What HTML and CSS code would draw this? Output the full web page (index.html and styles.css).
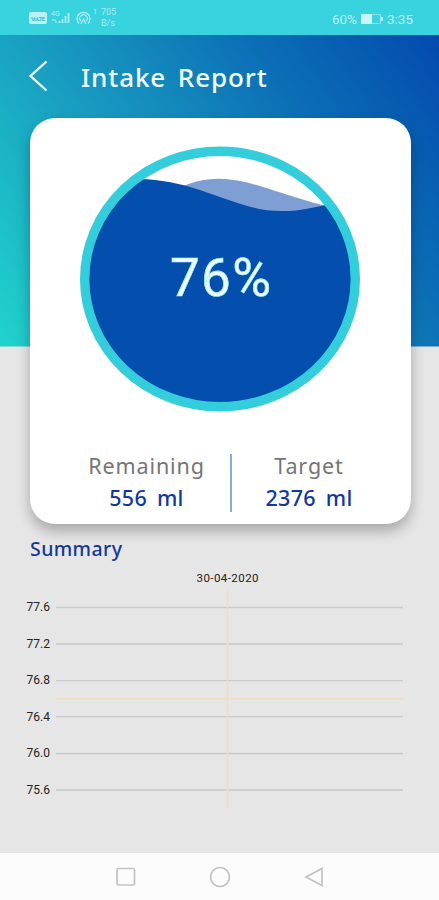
FILE: index.html
```html
<!DOCTYPE html>
<html lang="en">
<head>
    <meta charset="UTF-8">
    <meta name="viewport" content="width=device-width, initial-scale=1.0">
    <title>Intake Report</title>
    <link rel="stylesheet" href="styles.css">
</head>
<body>
    <div class="status-bar">
        <div class="status-left">
            <svg class="status-icons" width="70" height="22" viewBox="0 0 70 22">
                <rect x="0" y="5" width="18" height="12" rx="2" fill="#b9f1f5"/>
                <text x="9" y="13.500" class="volte" textLength="14">VoLTE</text>
                <text x="22" y="9" class="tiny">4G</text>
                <path d="M23 13h4M27 14v2" stroke="#a9ecf1" stroke-width="1"/>
                <path d="M30.500 16v-2M33.500 16v-4M36.500 16v-7M39.500 16v-10" stroke="#a9ecf1" stroke-width="1.800"/>
                <g fill="none" stroke="#b0eff3" stroke-width="1.200">
                    <path d="M50 16.500a6.500 6.500 0 1 1 9 0"/>
                    <path d="M51.800 14a3.700 3.700 0 1 1 5.400 0"/>
                    <path d="M52 17l2.500-5 2.500 5"/>
                </g>
                <text x="64" y="7" class="tiny">1</text>
            </svg>
            <div class="speed"><span>705</span><span>B/s</span></div>
        </div>
        <div class="status-right">
            <span>60%</span>
            <svg width="24" height="10" viewBox="0 0 24 10">
                <path d="M1 0h11v10H1z" fill="#c9f5f8"/>
                <path d="M12 .6h8.500v8.800H12" fill="none" stroke="#8ce5eb" stroke-width="1"/>
                <path d="M22 3v4" stroke="#b9f1f5" stroke-width="1.800"/>
            </svg>
            <span>3:35</span>
        </div>
    </div>

    <main class="report">
        <header class="toolbar">
            <svg class="back" width="20" height="32" viewBox="0 0 20 32">
                <path d="M17.500 1.500L1.500 16l16 14.500" fill="none" stroke="#f4feff" stroke-width="2.300"/>
            </svg>
            <h1>Intake Report</h1>
        </header>

        <section class="card">
            <svg class="gauge" width="282" height="266" viewBox="0 0 282 266">
                <defs>
                    <clipPath id="bowl"><ellipse cx="141" cy="133" rx="133" ry="127"/></clipPath>
                </defs>
                <g clip-path="url(#bowl)">
                    <path d="M94 45C126 28 152 31 184 41S224 54 247 60L200 80Z" fill="#7f9fd4"/>
                    <path d="M0 44C30 36 48 31 76 34C126 39 162 66 204 65C224 65 236 61 282 51V266H0Z" fill="#044fad"/>
                </g>
                <ellipse cx="141" cy="133" rx="135.300" ry="127.700" fill="none" stroke="#33cddb" stroke-width="9.400"/>
                <text x="141.500" y="150" class="percent" textLength="101">76%</text>
            </svg>
            <div class="stats">
                <div class="stat">
                    <span class="label">Remaining</span>
                    <span class="value">556 ml</span>
                </div>
                <div class="stat">
                    <span class="label">Target</span>
                    <span class="value">2376 ml</span>
                </div>
            </div>
        </section>

        <h2>Summary</h2>
        <svg class="chart" width="439" height="250" viewBox="0 0 439 250">
            <text x="227.500" y="17" class="date" textLength="62">30-04-2020</text>
            <g class="ticks">
                <text x="50" y="46">77.6</text>
                <text x="50" y="82.500">77.2</text>
                <text x="50" y="119">76.8</text>
                <text x="50" y="155.500">76.4</text>
                <text x="50" y="192">76.0</text>
                <text x="50" y="228.500">75.6</text>
            </g>
            <path class="grid" d="M56 42.500h347M56 79h347M56 115.700h347M56 151.700h347M56 188.500h347M56 225h347"/>
            <path class="limit" d="M56 133.800h347M227.500 25v218"/>
        </svg>
    </main>

    <nav class="nav-bar">
        <svg width="20" height="20" viewBox="0 0 20 20"><rect x="1" y="1.500" width="17.500" height="16.500" rx="1.500"/></svg>
        <svg width="22" height="22" viewBox="0 0 22 22"><circle cx="11" cy="11" r="9.500"/></svg>
        <svg width="20" height="20" viewBox="0 0 20 20"><path d="M18 1.500v17L2 10z"/></svg>
    </nav>
</body>
</html>
```

FILE: styles.css
```css
* {
    box-sizing: border-box;
}
body {
    margin: 0;
    height: 900px;
    display: flex;
    flex-direction: column;
    font-family: "Noto Sans", sans-serif;
    background: #e6e6e6;
    overflow: hidden;
}
svg {
    display: block;
    flex: none;
}

/* status bar */
.status-bar {
    height: 35px;
    flex: none;
    display: flex;
    justify-content: space-between;
    padding: 0 26px 0 29px;
    background: #39d2df;
    color: #b9f1f5;
    font-family: Roboto, sans-serif;
}
.status-left {
    display: flex;
    padding-top: 7px;
}
.speed {
    display: flex;
    flex-direction: column;
    margin-left: 2px;
    font-size: 9px;
    line-height: 11px;
    color: #a9ecf1;
}
.volte {
    font-size: 6px;
    font-weight: bold;
    text-anchor: middle;
    fill: #39c3d0;
}
.tiny {
    font-size: 7px;
    fill: #b4f0f4;
}
.status-right {
    display: flex;
    align-items: center;
    gap: 3px;
    padding-top: 2px;
    font-size: 13.5px;
}

/* report */
.report {
    height: 818px;
    flex: none;
    background: linear-gradient(55deg, #20d3cc 0%, #1899c0 40%, #0b6db5 72%, #034aae 100%) no-repeat 0 0 / 100% 311.5px;
}
.toolbar {
    height: 83px;
    display: flex;
    align-items: center;
    gap: 32px;
    padding: 0 0 2px 29px;
}
h1 {
    margin: 2px 0 0;
    font-size: 26px;
    font-weight: 500;
    letter-spacing: 0.9px;
    word-spacing: 4px;
    color: #f4feff;
}
.card {
    width: 381px;
    height: 406px;
    margin-left: 30px;
    padding-top: 28px;
    background: #fff;
    border-radius: 25px;
    box-shadow: 0 7px 14px rgba(0, 0, 0, 0.28);
}
.gauge {
    margin-left: 49px;
}
.percent {
    font-family: Roboto, sans-serif;
    font-size: 53px;
    text-anchor: middle;
    fill: #f0ffff;
    stroke: #9ceef2;
    stroke-width: 0.7px;
}
.stats {
    display: flex;
    margin-top: 42px;
    padding: 0 25px 0 33px;
}
.stat {
    width: 167px;
    height: 58px;
    display: flex;
    flex-direction: column;
    align-items: center;
}
.stat + .stat {
    width: 156px;
    border-left: 2px solid #85aed5;
}
.label {
    font-size: 21.5px;
    line-height: 24px;
    letter-spacing: 0.9px;
    color: #757575;
}
.value {
    margin-top: 8px;
    font-size: 21.5px;
    font-weight: 500;
    line-height: 24px;
    letter-spacing: 0.3px;
    word-spacing: 4px;
    color: #12399a;
}
h2 {
    margin: 13px 0 0 30px;
    font-size: 19.5px;
    font-weight: 500;
    line-height: 24px;
    letter-spacing: 0.4px;
    color: #12399a;
}

/* chart */
.chart {
    margin-top: 4px;
    font-family: Roboto, sans-serif;
}
.date {
    font-size: 11.5px;
    text-anchor: middle;
    fill: #222;
}
.ticks {
    font-size: 12px;
    text-anchor: end;
    fill: #222;
}
.grid {
    stroke: #c6cacc;
    stroke-width: 1.3px;
}
.limit {
    stroke: #eedfc0;
    stroke-width: 1.5px;
    fill: none;
}

/* android navigation */
.nav-bar {
    flex: 1;
    display: flex;
    align-items: center;
    justify-content: center;
    gap: 73px;
    background: #fcfcfc;
}
.nav-bar svg {
    fill: none;
    stroke: #c2c2c2;
    stroke-width: 1.7px;
}
```
